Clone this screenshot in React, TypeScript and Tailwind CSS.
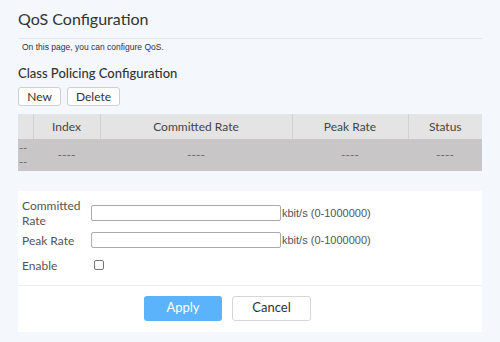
import React from "react"

const columns = ["Index", "Committed Rate", "Peak Rate", "Status"]

export default function App() {
	return (
		<div className="min-h-[342px] bg-[#f4f7fc] px-[18px] pt-[7px] text-[#333]" style={{ fontFamily: 'Lato, "Noto Sans", sans-serif' }}>
			<h1 className="text-[16px] leading-[24px] text-[#333]">QoS Configuration</h1>
			<div className="mt-[7px] border-t border-[#e3e7ec]" />
			<p className="mt-[3px] pl-[4px] text-[8.5px] leading-[10px] text-[#333]" style={{ fontFamily: '"Liberation Sans", Arial, sans-serif' }}>
				On this page, you can configure QoS.
			</p>

			<h2 className="mt-[12px] text-[13px] leading-[18px] font-medium text-[#333]">Class Policing Configuration</h2>

			<div className="mt-[5px] flex gap-[6px]">
				<button className="h-[19px] w-[43px] rounded-[3px] border border-[#cfcfcf] bg-white text-[12px] leading-none text-[#333]">New</button>
				<button className="h-[19px] w-[53px] rounded-[3px] border border-[#cfcfcf] bg-white text-[12px] leading-none text-[#333]">Delete</button>
			</div>

			<table className="mt-[8px] w-full table-fixed border-collapse text-[12px] text-[#444]">
				<colgroup>
					<col className="w-[15px]" />
					<col className="w-[67px]" />
					<col className="w-[192px]" />
					<col className="w-[116px]" />
					<col />
				</colgroup>
				<thead>
					<tr className="h-[25px] bg-[#e4e4e4]">
						<th className="border-r border-[#d2d2d2] font-normal" />
						{columns.map((c, i) => (
							<th key={c} className={`font-normal ${i < columns.length - 1 ? "border-r border-[#d2d2d2]" : ""}`}>{c}</th>
						))}
					</tr>
				</thead>
				<tbody>
					<tr className="h-[32px] bg-[#c8c6c6] text-[#666]">
						<td className="pl-[1px] text-[11px] leading-[14px]">--<br />--</td>
						<td className="text-center">----</td>
						<td className="text-center">----</td>
						<td className="text-center">----</td>
						<td className="text-center">----</td>
					</tr>
				</tbody>
			</table>

			<div className="mt-[20px] bg-white pb-[11px] pt-[7px] text-[12px] text-[#555]">
				<div className="flex items-center px-[4px]">
					<div className="w-[69px] leading-[15px]">
						Committed<br />Rate
					</div>
					<input className="h-[16px] w-[190px] rounded-[2px] border border-[#aaa] bg-white outline-none" />
					<span className="pl-[1px] text-[11px]" style={{ fontFamily: '"Liberation Sans", Arial, sans-serif' }}>kbit/s (0-1000000)</span>
				</div>
				<div className="mt-[4px] flex items-center px-[4px]">
					<div className="w-[69px] leading-[15px]">Peak Rate</div>
					<input className="h-[16px] w-[190px] rounded-[2px] border border-[#aaa] bg-white outline-none" />
					<span className="pl-[1px] text-[11px]" style={{ fontFamily: '"Liberation Sans", Arial, sans-serif' }}>kbit/s (0-1000000)</span>
				</div>
				<div className="mt-[9px] flex items-center px-[4px]">
					<div className="w-[72px] leading-[15px]">Enable</div>
					<span className="h-[10px] w-[10px] rounded-[2px] border border-[#777] bg-white" />
				</div>

				<div className="mt-[12px] border-t border-[#eeeeee]" />

				<div className="mt-[10px] flex gap-[10px] pl-[126px]">
					<button className="h-[25px] w-[78px] rounded-[3px] bg-[#5ab3fb] text-[13px] text-white">Apply</button>
					<button className="h-[25px] w-[79px] rounded-[3px] border border-[#d6d6d6] bg-white text-[13px] text-[#333]">Cancel</button>
				</div>
			</div>
		</div>
	)
}
